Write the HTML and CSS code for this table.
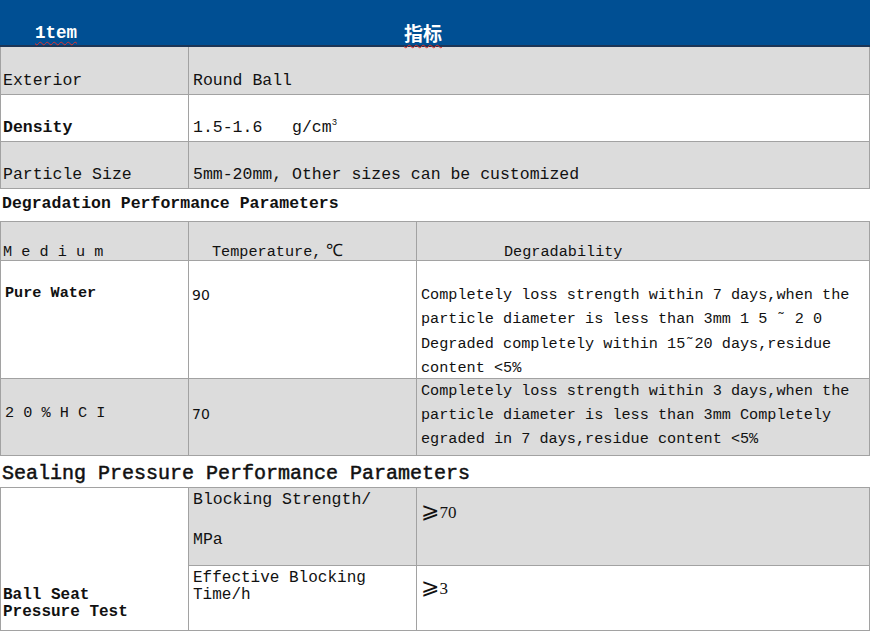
FILE: index.html
```html
<!DOCTYPE html>
<html>
<head>
<meta charset="utf-8">
<link rel="stylesheet" href="styles.css">
</head>
<body>
<div class="page">
  <div class="head">
    <span class="h-item">1tem</span>
    <span class="h-cn">指标</span>
  </div>
  <table class="t1">
    <colgroup><col class="c1"><col></colgroup>
    <tr class="gray"><td>Exterior</td><td class="v">Round Ball</td></tr>
    <tr><td class="b">Density</td><td class="v">1.5-1.6   g/cm<sup>3</sup></td></tr>
    <tr class="gray"><td>Particle Size</td><td class="v">5mm-20mm, Other sizes can be customized</td></tr>
  </table>
  <div class="sec1">Degradation Performance Parameters</div>
  <table class="t2">
    <colgroup><col class="c1"><col class="c2"><col></colgroup>
    <tr class="gray hdr">
      <td>M e d i u m</td>
      <td class="temp">Temperature,<span class="deg-c">℃</span></td>
      <td class="degh">Degradability</td>
    </tr>
    <tr class="r1">
      <td class="b pw">Pure Water</td>
      <td class="num n1">90</td>
      <td class="deg"><div class="lines">Completely loss strength within 7 days,when the
particle diameter is less than 3mm 1 5 ˜ 2 0
Degraded completely within 15˜20 days,residue
content &lt;5%</div></td>
    </tr>
    <tr class="gray r2">
      <td class="hcl">2 0 % H C I</td>
      <td class="num n2">70</td>
      <td class="deg2">Completely loss strength within 3 days,when the
particle diameter is less than 3mm Completely
egraded in 7 days,residue content &lt;5%</td>
    </tr>
  </table>
  <div class="sec2">Sealing Pressure Performance Parameters</div>
  <table class="t3">
    <colgroup><col class="c1"><col class="c2"><col></colgroup>
    <tr class="s1">
      <td rowspan="2" class="b ball">Ball Seat<br>Pressure Test</td>
      <td class="gray bs">Blocking Strength/<br><br>MPa</td>
      <td class="gray val v1"><span class="ge">⩾</span>70</td>
    </tr>
    <tr class="s2">
      <td class="eb">Effective Blocking<br>Time/h</td>
      <td class="val v2"><span class="ge">⩾</span>3</td>
    </tr>
  </table>
</div>
</body>
</html>
```
FILE: styles.css
```css
html, body {
  margin: 0;
  padding: 0;
  background: #ffffff;
}
.page {
  width: 871px;
  font-family: "Liberation Mono", "DejaVu Sans Mono", monospace;
  color: #111;
}
.head {
  box-sizing: border-box;
  width: 870px;
  height: 47px;
  background: #004f93;
  border-bottom: 2px solid #1c3556;
  display: flex;
  align-items: flex-end;
  color: #fff;
  font-weight: bold;
  padding-bottom: 2px;
}
.h-item, .h-cn {
  text-decoration: underline wavy #e0302a;
  text-decoration-thickness: 1px;
  text-underline-offset: 3px;
  line-height: 20px;
}
.h-item {
  font-size: 17.5px;
  margin-left: 35px;
}
.h-cn {
  font-family: "Noto Sans CJK SC", sans-serif;
  font-size: 19px;
  margin-left: 327px;
}
table {
  border-collapse: collapse;
  table-layout: fixed;
  width: 870px;
}
td {
  border: 1px solid #a2a2a2;
  padding: 0;
  white-space: pre;
}
.c1 { width: 188px; }
.c2 { width: 228px; }
.gray td, td.gray { background: #dcdcdc; }
.b { font-weight: bold; }

.t1 td {
  height: 47px;
  font-size: 16.5px;
  line-height: 20px;
  vertical-align: bottom;
  padding: 0 0 3px 2px;
  box-sizing: border-box;
}
.t1 tr:first-child td { border-top: none; }
.t1 td.v { padding-left: 4px; }
sup { font-size: 9px; vertical-align: 7px; line-height: 0; }

.sec1 {
  font-weight: bold;
  font-size: 16.5px;
  line-height: 20px;
  padding: 5px 0 7px 2px;
}
.t2 { font-size: 15.2px; }
.t2 .hdr td {
  height: 39px;
  box-sizing: border-box;
  vertical-align: bottom;
  line-height: 16px;
  padding: 0 0 0 2px;
}
.t2 .hdr td.temp { padding-left: 23px; }
.t2 .hdr td.degh { padding-left: 87px; }
.deg-c { margin-left: 5px; font-size: 17px; }
.t2 .r1 td {
  height: 118px;
  box-sizing: border-box;
  vertical-align: top;
}
.t2 td.pw { padding: 22px 0 0 4px; line-height: 20px; }
.num {
  font-family: "DejaVu Sans", sans-serif;
  font-size: 14px;
  line-height: 20px;
  padding-left: 3px !important;
}
.t2 td.n1 { padding-top: 24px; }
.t2 td.deg { padding: 22px 0 0 4px; }
.lines {
  line-height: 24.5px;
  margin-bottom: -6px;
}
.t2 .r2 td {
  height: 77px;
  box-sizing: border-box;
  vertical-align: top;
}
.t2 td.hcl { padding: 24px 0 0 4px; line-height: 20px; }
.t2 td.n2 { padding-top: 25px; }
.t2 td.deg2 { padding: 0 0 0 4px; line-height: 24px; }

.sec2 {
  font-size: 20px;
  line-height: 26px;
  padding: 5px 0 0 2px;
  height: 26px;
  -webkit-text-stroke: 0.5px #111;
}
.t3 { font-size: 16.5px; }
.t3 td { vertical-align: top; box-sizing: border-box; }
.t3 .s1 td { height: 78px; }
.t3 .s2 td { height: 65px; }
.t3 td.ball {
  vertical-align: bottom;
  font-size: 16px;
  line-height: 17.5px;
  padding: 0 0 8px 2px;
  background: #fff;
}
.t3 td.bs { line-height: 20px; padding: 2px 0 0 4px; }
.t3 td.eb { font-size: 16px; line-height: 17.5px; padding: 4px 0 0 4px; }
.val {
  font-family: "Liberation Serif", serif;
  font-size: 17px;
  line-height: 20px;
  padding-left: 4px !important;
}
.t3 td.v1 { padding-top: 13px; }
.t3 td.v2 { padding-top: 11px; }
.ge {
  font-family: "DejaVu Sans", sans-serif;
  font-size: 22px;
  line-height: 20px;
}
```
